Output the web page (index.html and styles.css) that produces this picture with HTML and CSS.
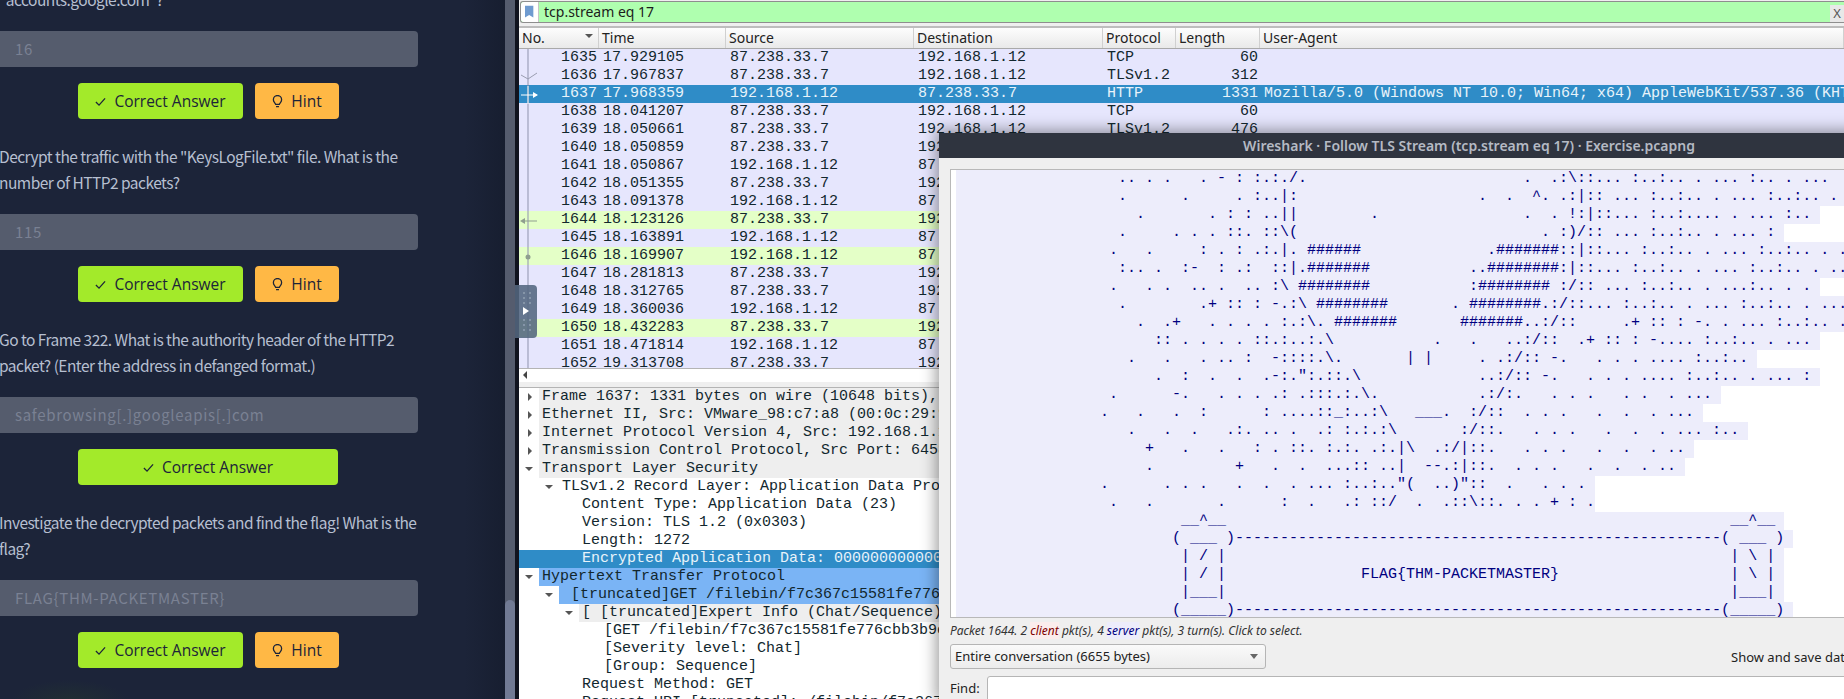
FILE: index.html
```html
<!DOCTYPE html>
<html lang="en">
<head>
  <meta charset="UTF-8">
  <title>Wireshark - Exercise</title>
  <link rel="stylesheet" href="styles.css">
</head>
<body>
  <div class="room">
    <div class="questions">
      <p class="question first">"accounts.google.com"?</p>
      <div class="answer">16</div>
      <div class="actions">
        <button class="btn btn-correct"><svg class="ico" viewBox="0 0 12 12"><path d="M1 6.5 4.4 10 11 2.6"/></svg>Correct Answer</button>
        <button class="btn btn-hint"><svg class="ico" viewBox="0 0 12 14"><path d="M4 10.2C3.6 8.6 1.5 7.6 1.5 5A4.5 4.5 0 0 1 10.500 5C10.500 7.600 8.400 8.600 8 10.200ZM4.400 12.500H7.600"/></svg>Hint</button>
      </div>

      <p class="question">Decrypt the traffic with the "KeysLogFile.txt" file. What is the number of HTTP2 packets?</p>
      <div class="answer">115</div>
      <div class="actions">
        <button class="btn btn-correct"><svg class="ico" viewBox="0 0 12 12"><path d="M1 6.5 4.4 10 11 2.6"/></svg>Correct Answer</button>
        <button class="btn btn-hint"><svg class="ico" viewBox="0 0 12 14"><path d="M4 10.2C3.6 8.6 1.5 7.6 1.5 5A4.5 4.5 0 0 1 10.500 5C10.500 7.600 8.400 8.600 8 10.200ZM4.400 12.500H7.600"/></svg>Hint</button>
      </div>

      <p class="question">Go to Frame 322. What is the authority header of the HTTP2 packet? (Enter the address in defanged format.)</p>
      <div class="answer">safebrowsing[.]googleapis[.]com</div>
      <div class="actions">
        <button class="btn btn-correct btn-wide"><svg class="ico" viewBox="0 0 12 12"><path d="M1 6.5 4.4 10 11 2.6"/></svg>Correct Answer</button>
      </div>

      <p class="question">Investigate the decrypted packets and find the flag! What is the flag?</p>
      <div class="answer">FLAG{THM-PACKETMASTER}</div>
      <div class="actions">
        <button class="btn btn-correct"><svg class="ico" viewBox="0 0 12 12"><path d="M1 6.5 4.4 10 11 2.6"/></svg>Correct Answer</button>
        <button class="btn btn-hint"><svg class="ico" viewBox="0 0 12 14"><path d="M4 10.2C3.6 8.6 1.5 7.6 1.5 5A4.5 4.5 0 0 1 10.500 5C10.500 7.600 8.400 8.600 8 10.200ZM4.400 12.500H7.600"/></svg>Hint</button>
      </div>
    </div>
    <div class="scrollbar"><div class="thumb"></div></div>
  </div>

  <div class="wireshark">
    <div class="filter">
      <div class="bookmark"><svg viewBox="0 0 12 15" width="10" height="14"><path d="M0 0H10V14L5 11 0 14Z" fill="#6f9bd0"/></svg></div>
      <div class="filter-text">tcp.stream eq 17</div>
      <div class="filter-x">X</div>
    </div>

    <div class="columns">
      <div class="col col-no">No.<span class="sort"></span></div>
      <div class="col">Time</div>
      <div class="col">Source</div>
      <div class="col">Destination</div>
      <div class="col">Protocol</div>
      <div class="col">Length</div>
      <div class="col">User-Agent</div>
    </div>

    <div class="packets">
      <div class="row"><span class="num">1635</span><span>17.929105</span><span>87.238.33.7</span><span>192.168.1.12</span><span>TCP</span><span class="num">60</span></div>
      <div class="row"><span class="num">1636</span><span>17.967837</span><span>87.238.33.7</span><span>192.168.1.12</span><span>TLSv1.2</span><span class="num">312</span></div>
      <div class="row selected"><span class="num">1637</span><span>17.968359</span><span>192.168.1.12</span><span>87.238.33.7</span><span>HTTP</span><span class="num">1331</span><span>Mozilla/5.0 (Windows NT 10.0; Win64; x64) AppleWebKit/537.36 (KHTML, like Gecko)</span></div>
      <div class="row"><span class="num">1638</span><span>18.041207</span><span>87.238.33.7</span><span>192.168.1.12</span><span>TCP</span><span class="num">60</span></div>
      <div class="row"><span class="num">1639</span><span>18.050661</span><span>87.238.33.7</span><span>192.168.1.12</span><span>TLSv1.2</span><span class="num">476</span></div>
      <div class="row"><span class="num">1640</span><span>18.050859</span><span>87.238.33.7</span><span>192.168.1.12</span></div>
      <div class="row"><span class="num">1641</span><span>18.050867</span><span>192.168.1.12</span><span>87.238.33.7</span></div>
      <div class="row"><span class="num">1642</span><span>18.051355</span><span>87.238.33.7</span><span>192.168.1.12</span></div>
      <div class="row"><span class="num">1643</span><span>18.091378</span><span>192.168.1.12</span><span>87.238.33.7</span></div>
      <div class="row green"><span class="num">1644</span><span>18.123126</span><span>87.238.33.7</span><span>192.168.1.12</span></div>
      <div class="row"><span class="num">1645</span><span>18.163891</span><span>192.168.1.12</span><span>87.238.33.7</span></div>
      <div class="row green"><span class="num">1646</span><span>18.169907</span><span>192.168.1.12</span><span>87.238.33.7</span></div>
      <div class="row"><span class="num">1647</span><span>18.281813</span><span>87.238.33.7</span><span>192.168.1.12</span></div>
      <div class="row"><span class="num">1648</span><span>18.312765</span><span>87.238.33.7</span><span>192.168.1.12</span></div>
      <div class="row"><span class="num">1649</span><span>18.360036</span><span>192.168.1.12</span><span>87.238.33.7</span></div>
      <div class="row green"><span class="num">1650</span><span>18.432283</span><span>87.238.33.7</span><span>192.168.1.12</span></div>
      <div class="row"><span class="num">1651</span><span>18.471814</span><span>192.168.1.12</span><span>87.238.33.7</span></div>
      <div class="row"><span class="num">1652</span><span>19.313708</span><span>87.238.33.7</span><span>192.168.1.12</span></div>

      <!-- related packet marks in the first column -->
      <svg class="marks" viewBox="0 0 28 320" width="28" height="320">
        <path d="M9 0V320" stroke="#8f93ad" fill="none"/>
        <path d="M2 26 9 30 18 24" stroke="#9a9db0" fill="none"/>
        <path d="M2 46H18M9 37V55" stroke="#fff" fill="none"/>
        <path d="M14 43 19 46 14 49Z" fill="#fff"/>
        <path d="M6 172H18" stroke="#8f9f8f" fill="none"/>
        <path d="M6 169 1 172 6 175Z" fill="#8f9f8f"/>
        <circle cx="9" cy="208" r="2.500" fill="#8f9f8f"/>
      </svg>
    </div>

    <div class="hscroll"><span class="hscroll-left"></span></div>

    <div class="tree">
      <div class="node closed band lv0">Frame 1637: 1331 bytes on wire (10648 bits), 1331 bytes captured (10648 bits) on interface</div>
      <div class="node closed band lv0">Ethernet II, Src: VMware_98:c7:a8 (00:0c:29:98:c7:a8), Dst: VMware_e0:2b:1f</div>
      <div class="node closed band lv0">Internet Protocol Version 4, Src: 192.168.1.12, Dst: 87.238.33.7</div>
      <div class="node closed band lv0">Transmission Control Protocol, Src Port: 64582, Dst Port: 443, Seq: 1</div>
      <div class="node open band lv0">Transport Layer Security</div>
      <div class="node open lv1">TLSv1.2 Record Layer: Application Data Protocol: http-over-tls</div>
      <div class="node lv2">Content Type: Application Data (23)</div>
      <div class="node lv2">Version: TLS 1.2 (0x0303)</div>
      <div class="node lv2">Length: 1272</div>
      <div class="node lv2 picked">Encrypted Application Data: 000000000000000176c5d0ab</div>
      <div class="node open lv0 related">Hypertext Transfer Protocol</div>
      <div class="node open lv1 related"> [truncated]GET /filebin/f7c367c15581fe776cbb3b9e5e1a0</div>
      <div class="node open lv2 band">[ [truncated]Expert Info (Chat/Sequence): GET /filebin</div>
      <div class="node lv3">[GET /filebin/f7c367c15581fe776cbb3b9e5e1a0b2f</div>
      <div class="node lv3">[Severity level: Chat]</div>
      <div class="node lv3">[Group: Sequence]</div>
      <div class="node lv2">Request Method: GET</div>
      <div class="node lv2">Request URI [truncated]: /filebin/f7c367c15581fe776cbb3b</div>
    </div>
  </div>

  <!-- panel toggle floating over the packet list -->
  <svg class="handle" viewBox="0 0 22 53" width="22" height="53">
    <path d="M0 0H18Q22 0 22 4V49Q22 53 18 53H0Z" fill="#53667f" fill-opacity=".88"/>
    <path d="M8 7h2v2H8zM14 7h2v2h-2zM8 12h2v2H8zM14 12h2v2h-2zM8 17h2v2H8zM14 17h2v2h-2zM8 34h2v2H8zM14 34h2v2h-2zM8 39h2v2H8zM14 39h2v2h-2zM8 44h2v2H8zM14 44h2v2h-2z" fill="#8595a8"/>
    <path d="M8 22 14 26 8 30Z" fill="#fff"/>
  </svg>

  <div class="dialog">
    <div class="titlebar">Wireshark · Follow TLS Stream (tcp.stream eq 17) · Exercise.pcapng</div>
    <div class="dialog-body">
      <div class="stream">
<span class="ln">                  .. . .   . - : :.:./.                        .  .:\::... :..:.. . ... :.. . ...  </span>
<span class="ln">                  .      .     . :..|:                    .  .  ^. .:|:: ... :..:.. . ... :..:.. .   </span>
<span class="ln">                    .       . : : ..||        .                .  . !:|::... :..:.... . ... :.. </span>
<span class="ln">                  .     . . . ::. ::\(                           . :)/:: ... :..:.. . ... : </span>
<span class="ln">                 .   .     : . : .:.|. ######              .#######::|::... :..:.. . ... :..:.. . .   </span>
<span class="ln">                  :.. .  :-  : .:  ::|.#######           ..########:|::... :..:.. . ... :..:.. . ...  </span>
<span class="ln">                 .   . .  .. .  .. :\ ########           :######## :/:: ... :..:.. . ...:.. . . </span>
<span class="ln">                  .        .+ :: : -.:\ ########       . ########.:/::... :..:.. . ... :..:.. . ...  </span>
<span class="ln">                    .  .+   . . . . :.:\. #######       #######..:/::     .+ :: : -. . ... :..:.. .  </span>
<span class="ln">                      :: . . . . ::.:..:.\           .   .   ..:/::  .+ :: : -.... :..:.. . ... </span>
<span class="ln">                   .   .   . .. :  -::::.\.       | |     . .:/:: -.   . . . .... :..:.. </span>
<span class="ln">                      .  :  .  .  .-:.":.::.\             ..:/:: -.   . . . .... :..:.. . ... : </span>
<span class="ln">                 .      -.   . . . .: .:::.:.\.           .:/:.   . . .   . .  . ... </span>
<span class="ln">                .   .   .  :      : ....::_:..:\   ___.  :/::  . . .   .  .  . ... </span>
<span class="ln">                   .   .  .   .:. .. .  .: :.:.:\       :/::.   . . .   .  .  . ... :.. </span>
<span class="ln">                     +   .   .   : . ::. :.:. .:.|\  .:/|::.   . . .   .  .  . .. </span>
<span class="ln">                     .         +   .  .  ...:: ..|  --.:|::.  . . .   .  .  . .. </span>
<span class="ln">                .      . . .   .  .  . ... :..:.."(  ..)"::  .   . . . </span>
<span class="ln">                 .   .       .      :  .   .: ::/  .  .::\::. . . + : .</span>
<span class="ln">                         __^__                                                        __^__ </span>
<span class="ln">                        ( ___ )------------------------------------------------------( ___ ) </span>
<span class="ln">                         | / |                                                        | \ | </span>
<span class="ln">                         | / |               FLAG{THM-PACKETMASTER}                   | \ | </span>
<span class="ln">                         |___|                                                        |___| </span>
<span class="ln">                        (_____)------------------------------------------------------(_____) </span>
      </div>
      <div class="stats">Packet 1644. 2 <span class="client">client</span> pkt(s), 4 <span class="server">server</span> pkt(s), 3 turn(s). Click to select.</div>
      <div class="controls">
        <div class="combo">Entire conversation (6655 bytes)<span class="combo-arrow"></span></div>
        <div class="save-label">Show and save data as</div>
      </div>
      <div class="find">
        <label>Find:</label>
        <div class="find-input"></div>
      </div>
    </div>
  </div>
</body>
</html>
```

FILE: styles.css
```css
html, body {
  height: 100%;
}

body {
  margin: 0;
  height: 699px;
  overflow: hidden;
  display: flex;
  background-color: #10131f;
  position: relative;
}

/* room panel on the left */
.room {
  width: 519px;
  flex: none;
  display: flex;
  background: radial-gradient(ellipse 60px 22px at 70px 702px, #212f33, transparent),
    linear-gradient(90deg, #1c2439 0, #1c2439 465px, #171e30 505px, #10131f 505px);
  overflow: hidden;
}

.questions {
  width: 418px;
  padding-right: 87px;
  flex: none;
  font-family: "Noto Sans CJK SC", "Noto Sans", sans-serif;
}

.question {
  margin: -1px -4px 19px -1px;
  font-size: 15.5px;
  letter-spacing: -.53px;
  line-height: 26px;
  color: #b6bfd0;
}

.question.first {
  margin-top: -14px;
}

.answer {
  height: 36px;
  line-height: 36px;
  margin-left: -6px;
  padding-left: 21px;
  background-color: #555c6d;
  border-radius: 4px;
  font-size: 15px;
  letter-spacing: .68px;
  color: #7a8193;
}

.actions {
  display: flex;
  gap: 12px;
  margin: 16px 0 25px 78px;
}

.btn {
  height: 36px;
  display: flex;
  align-items: center;
  justify-content: center;
  gap: 8px;
  border: none;
  border-radius: 4px;
  padding: 0;
  font-family: "Open Sans", sans-serif;
  font-size: 15.5px;
  color: #1c2439;
}

.btn-correct {
  width: 165px;
  background-color: #a3ea2a;
}

.btn-wide {
  width: 260px;
}

.btn-hint {
  width: 84px;
  background-color: #ffb845;
}

.ico {
  width: 11px;
  height: 13px;
  fill: none;
  stroke: #1c2439;
  stroke-width: 1.4;
}

.scrollbar {
  width: 10px;
  flex: none;
  background-color: #555c6e;
  display: flex;
  flex-direction: column;
  justify-content: flex-end;
}

.thumb {
  height: 99px;
  background-color: #717a94;
  border-radius: 5px 5px 0 0;
}

/* main wireshark window */
.wireshark {
  flex: 1;
  min-width: 0;
  background-color: #efefef;
  font-family: "Liberation Mono", monospace;
  font-size: 15px;
  color: #12272e;
  overflow: hidden;
}

.filter {
  height: 20px;
  margin: 1px 0 0 1px;
  display: flex;
  border: 1px solid #8e8e8e;
  border-right: none;
  border-radius: 3px 0 0 3px;
  font-family: "Noto Sans", sans-serif;
  background-color: #afffaf;
}

.bookmark {
  width: 17px;
  flex: none;
  display: flex;
  align-items: center;
  justify-content: center;
  background-color: #fff;
  border-right: 1px solid #c5c5c5;
  border-radius: 3px 0 0 3px;
}

.filter-text {
  flex: 1;
  padding-left: 5px;
  font-size: 14px;
  line-height: 20px;
  color: #1c1c1c;
}

.filter-x {
  width: 14px;
  flex: none;
  margin-top: 3px;
  background-color: #e8e8e8;
  text-align: center;
  font-size: 13px;
  line-height: 16px;
  color: #555;
}

.columns {
  display: grid;
  grid-template-columns: 80px 127px 188px 189px 73px 84px 1fr;
  height: 20px;
  margin-top: 3px;
  border-top: 2px solid #bdbdbd;
  border-bottom: 1px solid #a9a9a9;
  background: linear-gradient(#fdfdfd, #e9e9e9);
  font-family: "Noto Sans", sans-serif;
  font-size: 14px;
  line-height: 20px;
  color: #222;
}

.col {
  padding-left: 3px;
  border-right: 1px solid #d0d0d0;
  white-space: nowrap;
  position: relative;
}

.sort {
  position: absolute;
  top: 6px;
  right: 5px;
  border-left: 4px solid transparent;
  border-right: 4px solid transparent;
  border-top: 4px solid #555;
}

.packets {
  height: 319px;
  background-color: #e6e6fd;
  border-bottom: 1px solid #b4b4b4;
  position: relative;
  overflow: hidden;
}

.row {
  display: grid;
  grid-template-columns: 80px 127px 188px 189px 73px 84px 1fr;
  height: 18px;
  line-height: 18px;
  white-space: pre;
}

.row > span {
  padding-left: 4px;
  overflow: hidden;
}

.row > .num {
  padding: 0 2px 0 0;
  text-align: right;
}

.row.selected {
  background-color: #2f8cc7;
  color: #e8f3fa;
}

.row.green {
  background-color: #e4ffc7;
}

.marks {
  position: absolute;
  top: 0;
  left: 0;
}

.hscroll {
  height: 13px;
  background-color: #fff;
  position: relative;
}

.hscroll-left {
  position: absolute;
  left: 4px;
  top: 2px;
  border-top: 4px solid transparent;
  border-bottom: 4px solid transparent;
  border-right: 4px solid #444;
}

.tree {
  margin-top: 5px;
  border-top: 1px solid #b4b4b4;
  background-color: #fff;
}

.node {
  height: 18px;
  line-height: 18px;
  white-space: pre;
  position: relative;
}

.lv0 { margin-left: 20px; padding-left: 3px; }
.lv1 { margin-left: 40px; padding-left: 3px; }
.lv2 { margin-left: 60px; padding-left: 3px; }
.lv3 { margin-left: 82px; padding-left: 3px; }

.band {
  background-color: #eee;
}

.related {
  background-color: #7ab4f5;
}

.node.picked {
  margin-left: 0;
  padding-left: 63px;
  background-color: #2f8cc7;
  color: #e8f3fa;
}

/* tree arrows */
.closed::before, .open::before {
  content: "";
  position: absolute;
  top: 5px;
  left: -11px;
}

.closed::before {
  border-top: 4px solid transparent;
  border-bottom: 4px solid transparent;
  border-left: 4px solid #555;
}

.open::before {
  top: 7px;
  left: -14px;
  border-left: 4px solid transparent;
  border-right: 4px solid transparent;
  border-top: 4px solid #555;
}

/* left panel toggle */
.handle {
  position: absolute;
  left: 515px;
  top: 285px;
}

/* follow stream dialog */
.dialog {
  position: absolute;
  left: 939px;
  top: 133px;
  width: 1060px;
  height: 566px;
  background-color: #efefef;
  box-shadow: 0 0 14px 3px rgba(0, 0, 0, .38);
  font-family: "Noto Sans", sans-serif;
  overflow: hidden;
}

.titlebar {
  height: 25px;
  background-color: #2f343f;
  color: #b5bac4;
  font-size: 14px;
  font-weight: 600;
  line-height: 25px;
  text-align: center;
}

.dialog-body {
  padding: 11px 0 0 11px;
}

.stream {
  height: 447px;
  border: 1px solid #b8b8b8;
  border-right: none;
  background-color: #fff;
  padding-left: 5px;
  overflow: hidden;
  font-family: "Liberation Mono", monospace;
  font-size: 15px;
  line-height: 18px;
}

.ln {
  display: block;
  width: fit-content;
  height: 18px;
  white-space: pre;
  background-color: #ededfb;
  color: #000080;
}

.stats {
  margin-top: 5px;
  height: 16px;
  font-size: 12px;
  font-style: italic;
  line-height: 16px;
  color: #333;
}

.client {
  background-color: #fbeded;
  color: #7f0000;
}

.server {
  background-color: #ededfb;
  color: #000080;
}

.controls {
  display: flex;
  align-items: center;
  margin-top: 5px;
}

.combo {
  width: 316px;
  height: 25px;
  box-sizing: border-box;
  padding-left: 4px;
  border: 1px solid #b5b5b5;
  border-radius: 3px;
  background: linear-gradient(#fafafa, #ececec);
  font-size: 13px;
  line-height: 23px;
  color: #222;
  position: relative;
}

.combo-arrow {
  position: absolute;
  right: 7px;
  top: 9px;
  border-left: 4px solid transparent;
  border-right: 4px solid transparent;
  border-top: 5px solid #666;
}

.save-label {
  margin-left: 465px;
  font-size: 13px;
  color: #222;
}

.find {
  display: flex;
  gap: 7px;
  margin-top: 7px;
  font-size: 13px;
  line-height: 24px;
  color: #222;
}

.find-input {
  flex: 1;
  height: 30px;
  background-color: #fff;
  border: 1px solid #b5b5b5;
  border-radius: 3px;
}
```
